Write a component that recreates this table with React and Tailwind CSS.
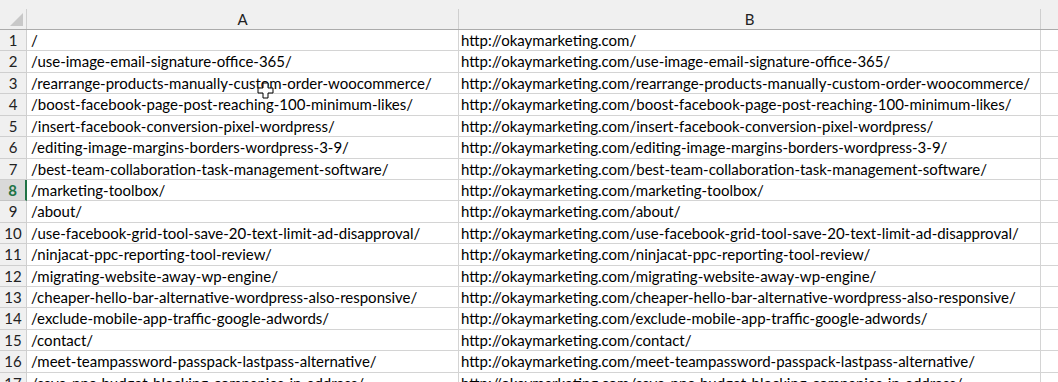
import React from 'react';

const PATHS = [
  '/',
  '/use-image-email-signature-office-365/',
  '/rearrange-products-manually-custom-order-woocommerce/',
  '/boost-facebook-page-post-reaching-100-minimum-likes/',
  '/insert-facebook-conversion-pixel-wordpress/',
  '/editing-image-margins-borders-wordpress-3-9/',
  '/best-team-collaboration-task-management-software/',
  '/marketing-toolbox/',
  '/about/',
  '/use-facebook-grid-tool-save-20-text-limit-ad-disapproval/',
  '/ninjacat-ppc-reporting-tool-review/',
  '/migrating-website-away-wp-engine/',
  '/cheaper-hello-bar-alternative-wordpress-also-responsive/',
  '/exclude-mobile-app-traffic-google-adwords/',
  '/contact/',
  '/meet-teampassword-passpack-lastpass-alternative/',
  '/save-ppc-budget-blocking-companies-ip-address/',
];

const SELECTED_ROW = 8;

function HeaderRow() {
  return (
    <div className="flex h-[30px] shrink-0 border-b border-[#ababab] bg-[#f0f0f0] pt-[9px]">
      <div className="relative h-[20px] w-[27px] shrink-0 border-r border-[#cfcfcf]">
        {/* select-all triangle */}
        <svg className="absolute left-[9px] top-[3px]" width="15" height="15" viewBox="0 0 15 15">
          <polygon points="14,1 14,14 1,14" fill="#c8c8c8" />
        </svg>
      </div>
      <div className="flex h-[20px] w-[432px] shrink-0 items-center justify-center border-r border-[#cfcfcf] text-[15px] text-[#222]">
        A
      </div>
      <div className="flex h-[20px] w-[582px] shrink-0 items-center justify-center border-r border-[#cfcfcf] text-[15px] text-[#222]">
        B
      </div>
      <div className="h-[20px] flex-1" />
    </div>
  );
}

function Row({ n, path }) {
  const selected = n === SELECTED_ROW;
  return (
    <div className="flex h-[21.43px] shrink-0">
      <div
        className={`flex w-[27px] shrink-0 items-center justify-center border-b text-[15px] ${
          selected
            ? 'border-r-2 border-b-[#c4c4c4] border-r-[#217346] bg-[#d9d9d9] font-bold text-[#217346]'
            : 'border-r border-[#cfcfcf] bg-[#f0f0f0] text-[#222]'
        }`}
      >
        {n}
      </div>
      <div className="flex w-[432px] shrink-0 items-center overflow-hidden whitespace-nowrap border-b border-r border-[#d4d4d4] pl-[4px] text-[15px] text-black">
        {path}
      </div>
      <div className="flex w-[582px] shrink-0 items-center overflow-hidden whitespace-nowrap border-b border-r border-[#d4d4d4] pl-[2px] text-[15px] text-black">
        http://okaymarketing.com{path}
      </div>
      <div className="flex-1 border-b border-[#d4d4d4]" />
    </div>
  );
}

export default function App() {
  return (
    <div
      className="relative flex h-[382px] w-[1058px] flex-col overflow-hidden bg-white"
      style={{ fontFamily: 'Lato, "Open Sans", sans-serif' }}
    >
      <HeaderRow />
      {PATHS.map((p, i) => (
        <Row key={i} n={i + 1} path={p} />
      ))}

      {/* Excel plus cursor */}
      <svg className="absolute left-[257px] top-[82px]" width="17" height="17" viewBox="0 0 17 17">
        <path
          d="M6 1h5v5h5v5h-5v5h-5v-5h-5v-5h5z"
          fill="#fff"
          stroke="#000"
          strokeWidth="1"
        />
      </svg>
    </div>
  );
}
